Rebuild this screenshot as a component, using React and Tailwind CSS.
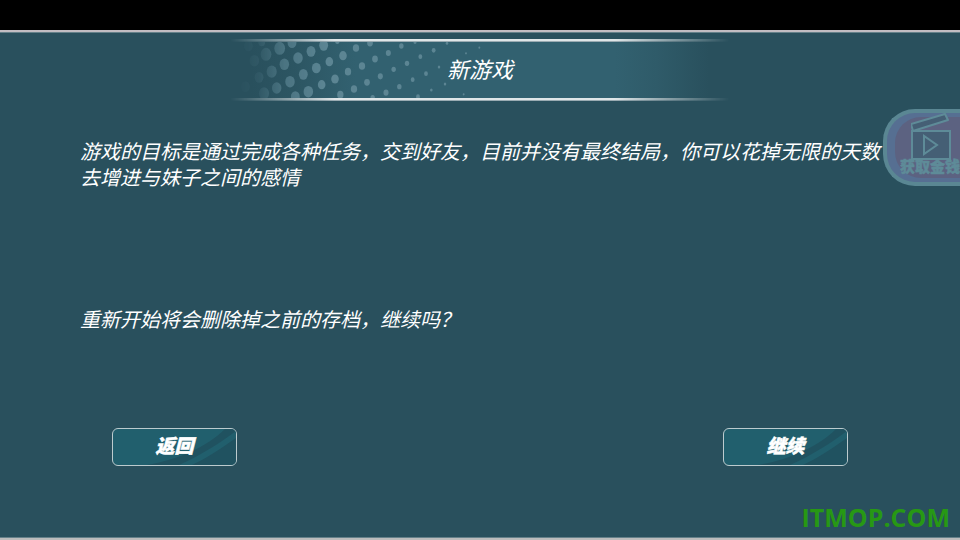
const DOTS = [
  [85, 78, 14], [125, 66, 11], [103, 122, 15], [76, 200, 14], [117, 172, 14], [132, 220, 16],
  [138, 103, 17], [155, 155, 16], [170, 204, 15], [179, 85, 17], [193, 133, 15], [210, 185, 15],
  [226, 230, 14], [216, 68, 14], [234, 114, 15], [250, 163, 14], [265, 215, 15], [273, 94, 14],
  [289, 144, 14], [305, 194, 12], [311, 76, 14], [328, 125, 12], [345, 177, 12], [361, 224, 10],
  [352, 64, 7], [369, 107, 12], [384, 155, 10], [402, 207, 10], [408, 84, 10], [426, 138, 10],
  [441, 187, 9], [458, 233, 7], [450, 69, 9], [465, 117, 9], [481, 169, 8], [498, 218, 8],
  [505, 99, 8], [521, 148, 7], [538, 200, 7], [544, 78, 7], [561, 130, 7], [578, 179, 6],
  [594, 230, 6], [585, 66, 5], [601, 110, 6], [618, 161, 6], [634, 210, 4], [641, 91, 6],
  [657, 141, 4], [675, 192, 4], [681, 70, 4], [738, 100, 3], [731, 223, 3], [778, 83, 3],
];

const PARAGRAPH = '游戏的目标是通过完成各种任务，交到好友，目前并没有最终结局，你可以花掉无限的天数去增进与妹子之间的感情';

function TitleRule() {
  return (
    <div className="h-[3px] border-b border-[#9aabb2] bg-[#dfe6e8] [mask-image:linear-gradient(90deg,transparent_2%,black_22%,black_76%,transparent_98%)]" />
  );
}

function TitleBanner({ children }) {
  return (
    <header className="mx-auto mt-1.5 w-[520px]">
      <TitleRule />
      <div className="relative flex h-14 items-center justify-center [background-image:linear-gradient(90deg,#29505d_6%,#2c5562_14%,#326170_26%,#326170_76%,#2f5b69_84%,#29505d_94%)]">
        <svg
          className="absolute inset-y-0 left-0 h-14 w-[280px] [mask-image:linear-gradient(90deg,transparent_6%,rgb(0_0_0/0.15)_14%,rgb(0_0_0/0.65)_23%,black_38%)]"
          viewBox="0 66 840 168"
          fill="#5c8593"
          aria-hidden="true"
        >
          {DOTS.map(([x, y, r]) => (
            <ellipse key={`${x}-${y}`} cx={x} cy={y} rx={r * 0.95} ry={r * 1.15} />
          ))}
        </svg>
        <h1 className="relative pb-1 text-[22px] leading-8 italic">{children}</h1>
      </div>
      <TitleRule />
    </header>
  );
}

function GameButton({ children }) {
  return (
    <button
      type="button"
      className="relative h-[38px] w-[125px] overflow-hidden rounded-md border border-[#bccbce] bg-[#215f6d] pb-1 text-[19px] leading-8 font-black italic"
    >
      <svg className="absolute inset-0 size-full" viewBox="0 0 123 36" preserveAspectRatio="none" aria-hidden="true">
        <path d="M34 36C64 31 94 18 112 0H123V36Z" fill="#205260" />
        <path d="M66 36C88 26 107 14 123 2V9C106 21 92 30 79 36Z" fill="#215f6d" />
      </svg>
      <span className="relative block [-webkit-text-stroke:0.5px_white]">{children}</span>
    </button>
  );
}

function CoinsButton() {
  return (
    <button
      type="button"
      className="absolute top-[109px] right-0 h-[77px] w-[77px] overflow-hidden rounded-l-[32px] border-y-4 border-l-4 border-[#5a8793] bg-[#566f92] text-[#5e8b98]"
    >
      <span className="absolute inset-y-1 right-0 left-2 rounded-l-[26px] bg-[#5c6281]" />
      <svg className="absolute top-0 left-6 h-12 w-12" viewBox="0 0 48 48" fill="#455f75" stroke="#5e8b98" strokeWidth="2" aria-hidden="true">
        <path d="M1 18V46H39V18Z" />
        <path d="M0 11L34 1L37 7L2 18Z" strokeLinejoin="round" />
        <path d="M13 23V41L26 32Z" />
      </svg>
      <span className="absolute right-0 bottom-1.5 text-[15px] leading-5 font-black whitespace-nowrap [-webkit-text-stroke:0.5px_#5e8b98]">
        获取金钱
      </span>
    </button>
  );
}

export default function App() {
  return (
    <div className="relative flex min-h-screen flex-col overflow-hidden bg-[#29505d] font-['Noto_Sans_CJK_SC',sans-serif] text-white">
      <div className="h-[30px] bg-black" />

      <main className="flex flex-1 flex-col border-y-2 border-t-[#c2bdc2] border-b-[#bcbcbc]">
        <div className="h-px bg-[#65818a]" />
        <TitleBanner>新游戏</TitleBanner>

        {/* Message */}
        <section className="mt-[37px] px-20 text-xl leading-[26px] italic">
          <p className="-mr-4 max-w-[808px]">{PARAGRAPH}</p>
          <p className="mt-[116px]">重新开始将会删除掉之前的存档，继续吗？</p>
        </section>

        {/* Actions */}
        <div className="mt-24 flex justify-between px-28">
          <GameButton>返回</GameButton>
          <GameButton>继续</GameButton>
        </div>

        <footer className="mt-auto pr-2.5 pb-1 text-right font-['Open_Sans',sans-serif] text-[25px] leading-8 font-bold text-[#279814]">
          ITMOP.COM
        </footer>
        <div className="h-px bg-[#65818a]" />
      </main>

      <CoinsButton />
    </div>
  );
}
